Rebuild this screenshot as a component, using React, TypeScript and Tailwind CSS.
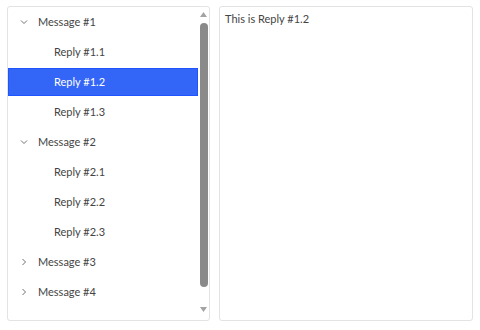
import React from "react";

type Node = { id: string; label: string; children?: Node[]; open?: boolean };

const tree: Node[] = [
  {
    id: "m1",
    label: "Message #1",
    open: true,
    children: [
      { id: "r11", label: "Reply #1.1" },
      { id: "r12", label: "Reply #1.2" },
      { id: "r13", label: "Reply #1.3" },
    ],
  },
  {
    id: "m2",
    label: "Message #2",
    open: true,
    children: [
      { id: "r21", label: "Reply #2.1" },
      { id: "r22", label: "Reply #2.2" },
      { id: "r23", label: "Reply #2.3" },
    ],
  },
  { id: "m3", label: "Message #3", children: [{ id: "r31", label: "Reply #3.1" }] },
  { id: "m4", label: "Message #4", children: [{ id: "r41", label: "Reply #4.1" }] },
];

const selectedId = "r12";

const Chevron = ({ open }: { open?: boolean }) => (
  <svg width="8" height="8" viewBox="0 0 8 8" fill="none" stroke="#707070" strokeWidth="1">
    {open ? <path d="M1 2.5 L4 5.5 L7 2.5" /> : <path d="M2.5 1 L5.5 4 L2.5 7" />}
  </svg>
);

const Row = ({ node, depth }: { node: Node; depth: number }) => {
  const selected = node.id === selectedId;
  return (
    <div className="h-[30px] py-px">
      <div
        className={
          "flex h-[28px] items-center border " +
          (selected
            ? "border-[#1f55ff] bg-[#3366f7] text-white"
            : "border-transparent text-[#444444]")
        }
      >
        {depth === 0 ? (
          <>
            <span className="flex w-[29px] justify-center pl-[1px]">
              <Chevron open={node.open} />
            </span>
            <span>{node.label}</span>
          </>
        ) : (
          <span className="pl-[45px]">{node.label}</span>
        )}
      </div>
    </div>
  );
};

const Scrollbar = () => (
  <div className="flex w-[11px] flex-col items-center pt-[5px] pb-[8px]">
    <svg width="7" height="5" viewBox="0 0 7 5">
      <path d="M0 5 L3.5 0 L7 5 Z" fill="#a3a3a3" />
    </svg>
    <div className="mt-[6px] h-[264px] w-[8px] rounded-full bg-[#8a8a8a]" />
    <div className="flex-1" />
    <svg width="7" height="5" viewBox="0 0 7 5">
      <path d="M0 0 L3.5 5 L7 0 Z" fill="#a3a3a3" />
    </svg>
  </div>
);

export default function App() {
  const rows: { node: Node; depth: number }[] = [];
  tree.forEach((m) => {
    rows.push({ node: m, depth: 0 });
    if (m.open) m.children?.forEach((c) => rows.push({ node: c, depth: 1 }));
  });

  return (
    <div
      className="flex h-[330px] w-[480px] gap-[9px] bg-white pt-[6px] pl-[7px] text-[11px] leading-[16px]"
      style={{ fontFamily: 'Lato, "Noto Sans", sans-serif' }}
    >
      <div className="flex h-[315px] w-[203px] rounded-[3px] border border-[#e3e3e3]">
        <div className="flex-1">
          {rows.map((r) => (
            <Row key={r.node.id} node={r.node} depth={r.depth} />
          ))}
        </div>
        <Scrollbar />
      </div>
      <div className="h-[315px] w-[254px] rounded-[3px] border border-[#e3e3e3] px-[5px] py-[4px] text-[#444444]">
        This is Reply #1.2
      </div>
    </div>
  );
}
